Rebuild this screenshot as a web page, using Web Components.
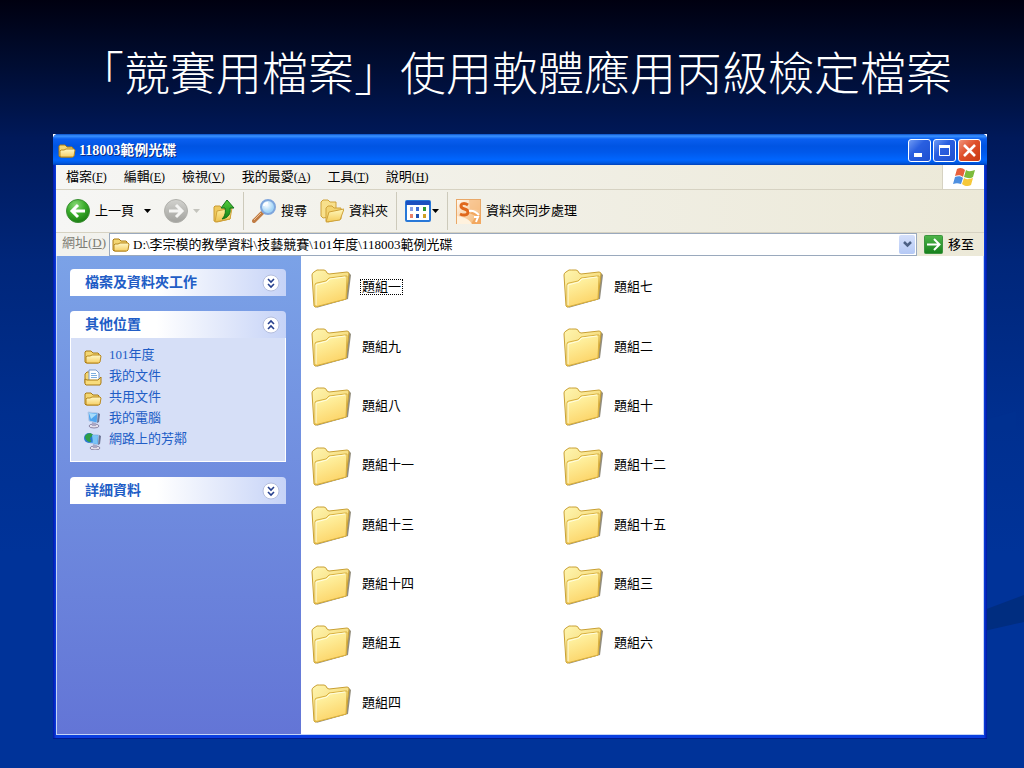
<!DOCTYPE html>
<html lang="zh-Hant">
<head>
<meta charset="utf-8">
<title>「競賽用檔案」使用軟體應用丙級檢定檔案</title>
<style>
body { margin: 0; font: 13px/18px "Liberation Serif", "Noto Sans CJK TC", sans-serif; color: #000; }
</style>
</head>
<body>
<slide-page heading="「競賽用檔案」使用軟體應用丙級檢定檔案">
  <xp-window heading="118003範例光碟">
    <xp-menubar slot="bars"></xp-menubar>
    <xp-toolbar slot="bars">
      <tool-button icon="back" menu>上一頁</tool-button>
      <tool-button icon="forward" menu off label="下一頁"></tool-button>
      <tool-button icon="up" label="往上"></tool-button>
      <tool-rule></tool-rule>
      <tool-button icon="search">搜尋</tool-button>
      <tool-button icon="folders">資料夾</tool-button>
      <tool-rule></tool-rule>
      <tool-button icon="views" menu tight label="檢視"></tool-button>
      <tool-rule></tool-rule>
      <tool-button icon="sync">資料夾同步處理</tool-button>
    </xp-toolbar>
    <xp-address slot="bars" path="D:\李宗模的教學資料\技藝競賽\101年度\118003範例光碟"></xp-address>
    <task-panel slot="side" heading="檔案及資料夾工作"></task-panel>
    <task-panel slot="side" heading="其他位置" open>
      <task-link icon="small">101年度</task-link>
      <task-link icon="docs">我的文件</task-link>
      <task-link icon="small">共用文件</task-link>
      <task-link icon="computer">我的電腦</task-link>
      <task-link icon="network">網路上的芳鄰</task-link>
    </task-panel>
    <task-panel slot="side" heading="詳細資料"></task-panel>
    <folder-item current>題組一</folder-item>
    <folder-item>題組九</folder-item>
    <folder-item>題組八</folder-item>
    <folder-item>題組十一</folder-item>
    <folder-item>題組十三</folder-item>
    <folder-item>題組十四</folder-item>
    <folder-item>題組五</folder-item>
    <folder-item>題組四</folder-item>
    <folder-item>題組七</folder-item>
    <folder-item>題組二</folder-item>
    <folder-item>題組十</folder-item>
    <folder-item>題組十二</folder-item>
    <folder-item>題組十五</folder-item>
    <folder-item>題組三</folder-item>
    <folder-item>題組六</folder-item>
  </xp-window>
</slide-page>
<script>
const grad = (id, a, b, dir = 'x2="0" y2="1"') =>
  `<linearGradient id="${id}" x1="0" y1="0" ${dir}><stop offset="0" stop-color="${a}"/><stop offset="1" stop-color="${b}"/></linearGradient>`;
const svg = (w, h, body) => `<svg width="${w}" height="${h}" viewBox="0 0 ${w} ${h}" aria-hidden="true">${body}</svg>`;
const flag = `
  <path d="M4 3C7 1 10 2 12 4L10 11C8 9 5 9 2 10Z" fill="#e8603c"/>
  <path d="M13 4C16 6 19 5 22 4L20 11C17 13 14 12 11 11Z" fill="#7dbb3c"/>
  <path d="M2 11C5 10 8 10 10 12L8 18C5 17 3 17 0 18Z" fill="#4e8fe0"/>
  <path d="M11 12C14 14 17 13 20 12L18 19C15 21 11 20 9 18Z" fill="#f6c83a"/>`;
const monitor = `
  <ellipse cx="10" cy="15" rx="5" ry="2" fill="#e4dfea" stroke="#8a86a6"/>
  <path d="M8 11h4v4H8z" fill="#a9a6c4"/>
  <path d="M4 1L14 2L13 12L5 10Z" fill="#4ea5ef" stroke="#b9cbe8"/>
  <path d="M14 2L16 3L15 11L13 12Z" fill="#6c7596"/>
  <path d="M5 2L13 3L7 8Z" fill="#a8dcfb"/>`;
const smallFolder = `<defs>${grad('f', '#fff9c8', '#f6cf66')}</defs>
  <path d="M1 13V3L2 2H7L9 4H14L15 5V13L14 14H2Z" fill="#f3d673" stroke="#a97a14"/>
  <path d="M2 13V8L3 7H6L8 6H16L17 7L16 13L15 14H3Z" fill="url(#f)" stroke="#b98a20"/>`;

const ICONS = {
  back: svg(24, 24, `<defs><radialGradient id="g" cx=".4" cy=".25" r=".8"><stop offset="0" stop-color="#8ad978"/><stop offset=".5" stop-color="#3aad2b"/><stop offset="1" stop-color="#17790f"/></radialGradient></defs>
    <circle cx="12" cy="12" r="11.5" fill="url(#g)" stroke="#3c8f34"/><path d="M12 6L6 12L12 18M7 12H19" fill="none" stroke="#fff" stroke-width="3"/>`),
  forward: svg(24, 24, `<defs>${grad('g', '#d2d2ce', '#a2a29e')}</defs>
    <circle cx="12" cy="12" r="11.5" fill="url(#g)" stroke="#b0b0ab"/><path d="M12 6L18 12L12 18M17 12H5" fill="none" stroke="#f5f5f3" stroke-width="3"/>`),
  up: svg(22, 24, `<defs>${grad('f', '#fff3a4', '#edc04c')}${grad('g', '#54cf3c', '#128014')}</defs>
    <path d="M1 22V8L2 7H7L9 9H18L17 20L4 23Z" fill="#efc95c" stroke="#c99a30"/>
    <path d="M4 12L19 9L17 20L2 23Z" fill="url(#f)" stroke="#d0a23a"/>
    <path d="M14 1L21 9H17C18 15 15 19 9 20C12 17 13 13 12 9H8Z" fill="url(#g)" stroke="#15741a"/>`),
  search: svg(24, 24, `<defs><radialGradient id="g" cx=".4" cy=".35"><stop offset="0" stop-color="#fff"/><stop offset="1" stop-color="#a3d5f7"/></radialGradient></defs>
    <path d="M2 22L10 14" stroke="#c07c44" stroke-width="4" stroke-linecap="round"/><path d="M2 21L9 14" stroke="#ecc094"/>
    <circle cx="16" cy="8" r="7" fill="url(#g)" stroke="#7fa6dc" stroke-width="2"/><path d="M12 7C12 5 14 4 16 4" stroke="#fff" stroke-width="2" fill="none"/>`),
  folders: svg(24, 24, `<defs>${grad('f', '#fff8bd', '#f4cc5a')}</defs>
    <path d="M1 17V3L3 1H8L10 3H16V17L3 19Z" fill="#f8e08c" stroke="#cfa23a"/>
    <path d="M6 22V9L8 7H12L14 9H21V20L8 23Z" fill="#f3d470" stroke="#cfa23a"/>
    <path d="M9 13L24 10L20 21L6 23Z" fill="url(#f)" stroke="#cfa23a"/>`),
  views: svg(26, 22, `<rect x="1" y="1" width="24" height="20" rx="1" fill="#fff" stroke="#2878d8" stroke-width="2"/><path d="M1 1h24v4H1z" fill="#1c50c0"/>
    <path d="M5 7h3v4H5z" fill="#8aa2e8"/><path d="M11 7h3v4h-3z" fill="#3c6cd4"/><path d="M18 7h3v4h-3z" fill="#2c9a34"/>
    <path d="M5 14h3v4H5z" fill="#ec8068"/><path d="M11 14h3v4h-3z" fill="#1c50b0"/><path d="M18 14h3v4h-3z" fill="#cda024"/>`),
  sync: svg(25, 25, `<defs>${grad('g', '#fffaf2', '#f3b068', 'x2="1" y2="1"')}</defs>
    <rect x=".5" y=".5" width="24" height="24" fill="url(#g)" stroke="#e9a868"/>
    <path d="M13 1H24V12C20 10 16 11 14 12Z" fill="#f6bc80" opacity=".7"/>
    <path d="M13 14C18 12 22 13 25 16V25H15L20 17Z" fill="#f2a860"/>
    <path d="M1 17C8 18 13 20 16 25H1Z" fill="#fff2de"/>
    <path d="M12 6C9 4 5 4 5 7C5 11 12 9 12 13C12 16 8 17 4 15" fill="none" stroke="#e0681c" stroke-width="3"/>
    <path d="M13 12C17 11 20 13 23 16M18 18H22L20 23" fill="none" stroke="#fff" stroke-width="2"/>`),
  caret: svg(7, 4, '<path d="M0 0H7L3.5 4Z" fill="currentColor"/>'),
  small: svg(18, 16, smallFolder),
  docs: svg(18, 17, `<path d="M1 14V5L3 3H7V14Z" fill="#f3d673" stroke="#a97a14"/><path d="M5 1H12L15 4V12H5Z" fill="#fff" stroke="#7d9cc9"/>
    <path d="M7 4.5h5M7 6.500h6M7 8.500h6" stroke="#7fb0e0"/><path d="M1 10L3 11H14L17 8V14L16 16H2L1 15Z" fill="#f8dc7c" stroke="#a97a14"/>`),
  computer: svg(18, 18, monitor),
  network: svg(18, 18, `<g transform="translate(1 1)">${monitor}</g><circle cx="5" cy="6" r="5" fill="#2b7bd0"/><path d="M1 4C3 1 7 0 9 3L6 6L7 10C4 10 1 8 1 4Z" fill="#2f9e46"/><path d="M8 3L14 4L13 12L9 11Z" fill="#7cc4f6"/>`),
  address: svg(18, 16, smallFolder),
  flag: svg(22, 22, flag),
  go: svg(19, 19, `<defs>${grad('g', '#4fb64a', '#16801c')}</defs><rect x=".5" y=".5" width="18" height="18" rx="1" fill="url(#g)" stroke="#3d9440"/>
    <path d="M3 9.500H15M10 4L15.500 9.500L10 15" fill="none" stroke="#fff" stroke-width="2"/>`),
  down: svg(9, 7, '<path d="M1 1L4.500 4.500L8 1" fill="none" stroke="#4d6185" stroke-width="2.500"/>'),
  more: svg(18, 18, `<circle cx="9" cy="9" r="8" fill="#fff" stroke="#b4bede"/><path d="M6 5L9 8L12 5M6 10L9 13L12 10" fill="none" stroke="#27408e" stroke-width="1.600"/>`),
  less: svg(18, 18, `<circle cx="9" cy="9" r="8" fill="#fff" stroke="#b4bede"/><path d="M6 8L9 5L12 8M6 13L9 10L12 13" fill="none" stroke="#27408e" stroke-width="1.600"/>`),
  min: svg(21, 21, '<path d="M5 13h8v4H5z" fill="#fff"/>'),
  max: svg(21, 21, '<path d="M5.500 5.500h10v10h-10z" fill="none" stroke="#fff"/><path d="M5 5h11v3H5z" fill="#fff"/>'),
  close: svg(21, 21, '<path d="M5 5L16 16M16 5L5 16" stroke="#fff" stroke-width="2.600"/>'),
  folder: svg(40, 40, `<defs>${grad('f', '#fffbb4', '#fcd468', 'x2=".4" y2="1"')}${grad('b', '#fff6b0', '#f0cc60', 'x2="1" y2="1"')}</defs>
    <path d="M5 39L37 30L40 6L38 4Z" fill="#77705c" opacity=".8"/>
    <path d="M3 37L1 6Q1 4 3 3L6 1Q8 1 13 1Q15 1 16 4L18 5L36 3Q38 3 38 5L35 30L4 38Z" fill="url(#b)" stroke="#c9a034"/>
    <path d="M4 38L4 16Q4 14 6 14L15 12L18 9L34 7Q37 6 36 9L35 30Z" fill="url(#f)" stroke="#d8b040"/>
    <path d="M5 36L5 16L16 13L19 10L34 8" fill="none" stroke="#fffde0"/>`)
};

const RESET = `*{box-sizing:border-box} svg{display:block;flex:none} button,input{font:inherit;color:inherit;border:0;margin:0;padding:0;background:none} a{color:inherit;text-decoration:none}`;
const define = (name, css, html) => customElements.define(name, class extends HTMLElement {
  constructor() {
    super();
    const t = document.createElement('template');
    t.innerHTML = `<style>${RESET}${css}</style>${html(this)}`;
    this.attachShadow({ mode: 'open' }).append(t.content.cloneNode(true));
  }
});

define('slide-page', `
  :host{position:relative;display:flex;flex-direction:column;min-height:100vh;padding:0 37px 29px 53px;box-sizing:border-box;
    background:linear-gradient(#000010 0,#000c30 8%,#00195a 18%,#00267a 34%,#002f8f 54%,#003399 72%,#003399)}
  h1{margin:0;padding:40px 0 34px 25px;font:300 46px/60px "Noto Sans CJK TC",sans-serif;color:#fff;white-space:nowrap}
  .swoosh{position:absolute;right:0;bottom:0}
  slot::slotted(*){flex:1}`,
  el => `<div class="swoosh">${svg(40, 360, '<path d="M0 202L40 187V214L0 223Z" fill="#002d80"/><path d="M0 12L32 3V22H0Z" fill="#003090"/>')}</div>
    <h1>${el.getAttribute('heading')}</h1><slot></slot>`);

define('xp-window', `
  :host{position:relative;display:flex;flex-direction:column;background:linear-gradient(#fff 0 8px,transparent 8px)}
  .frame{flex:1;display:flex;flex-direction:column;padding:0 3px 3px;background:linear-gradient(90deg,#0018a8,#0a3fe0 3px,#0a3fe0 calc(100% - 3px),#0018a0);border-radius:5px 5px 0 0;overflow:hidden;border-bottom:1px solid #001a90}
  header{display:flex;align-items:center;height:31px;margin:0 -3px;padding:2px 6px 0 5px;gap:2px;color:#fff;
    background:linear-gradient(#0a50c8 0,#3a92ff 2px,#0a5ff0 5px,#0054e3 12px,#0058ea 18px,#0066ff 26px,#0058e0 29px,#0040b8)}
  h2{flex:1;margin:0;padding-left:1px;font-size:14px;line-height:18px;text-shadow:1px 1px #0a2a80}
  .c{border:1px solid #fff;border-radius:3px;width:23px;height:23px;background:linear-gradient(135deg,#6f9bf4,#2a5fe0 40%,#1e4fd0)}
  .c.x{background:linear-gradient(135deg,#f0937a,#df4f2a 45%,#c83a14)}
  .body{flex:1;display:grid;grid-template-columns:244px 1fr;background:#fff;border:solid #c4d4f6;border-width:0 1px 1px}
  aside{display:flex;flex-direction:column;gap:15px;padding:13px 15px 13px 13px;background:linear-gradient(#7ba2e7,#6375d6)}
  .files{display:grid;grid-auto-flow:column;grid-template-rows:repeat(8,1fr);grid-auto-columns:252px;padding:3px 0 0 10px}`,
  el => `<div class="frame"><header>${svg(18, 16, smallFolder)}<h2>${el.getAttribute('heading')}</h2>
    <button class="c" aria-label="最小化">${ICONS.min}</button><button class="c" aria-label="最大化">${ICONS.max}</button><button class="c x" aria-label="關閉">${ICONS.close}</button></header>
    <slot name="bars"></slot><div class="body"><aside><slot name="side"></slot></aside><main class="files"><slot></slot></main></div></div>`);

define('xp-menubar', `
  :host{display:flex;height:24px;background:linear-gradient(90deg,#f6f6f4,#ece9d8);border-bottom:1px solid #d6d2c2}
  nav{flex:1;display:flex;align-items:center;gap:17px;padding-left:10px}
  small{font-size:12px}
  .logo{display:flex;align-items:center;justify-content:center;width:42px;background:#fff;border-left:1px solid #d6d2c2}`,
  () => `<nav>${[['檔案', 'F'], ['編輯', 'E'], ['檢視', 'V'], ['我的最愛', 'A'], ['工具', 'T'], ['說明', 'H']]
    .map(([t, k]) => `<button>${t}<small>(<u>${k}</u>)</small></button>`).join('')}</nav><div class="logo">${ICONS.flag}</div>`);

define('xp-toolbar', `:host{display:flex;align-items:center;gap:13px;height:43px;padding-left:10px;background:linear-gradient(90deg,#f6f6f4,#ece9d8);border-bottom:1px solid #d6d2c2;box-sizing:border-box}`, () => '<slot></slot>');
define('tool-rule', `:host{display:block;width:1px;height:38px;margin:0 -5px;background:#cdcabb}`, () => '');
define('tool-button', `
  :host{display:block}
  button{display:flex;align-items:center;gap:5px;white-space:nowrap}
  :host([tight]) button{gap:1px}
  .caret{color:#000} :host([off]) .caret{color:#c4c4bd}
  .wide{margin-left:5px}`,
  el => `<button${el.hasAttribute('label') ? ` aria-label="${el.getAttribute('label')}"` : ''}>${ICONS[el.getAttribute('icon')]}${el.textContent.trim() ? '<span><slot></slot></span>' : ''}${el.hasAttribute('menu') ? `<span class="caret${el.hasAttribute('label') ? '' : ' wide'}">${ICONS.caret}</span>` : ''}</button>`);

define('xp-address', `
  :host{display:flex;align-items:stretch;height:23px;padding:0 1px;background:linear-gradient(90deg,#f2f2ee,#ece9d8);box-sizing:border-box}
  label{width:52px;padding:1px 0 0 5px;color:#7d7c73;white-space:nowrap}
  .box{flex:1;display:flex;align-items:center;gap:3px;padding-left:2px;background:#fff;border:1px solid #9aa9bd}
  input{flex:1;min-width:0;outline:0}
  .drop{display:flex;align-items:center;justify-content:center;width:16px;height:19px;background:linear-gradient(#d5e0fb,#b5c9f5);border-radius:2px;margin-right:1px}
  .go{display:flex;align-items:center;gap:5px;width:66px;padding-left:7px}`,
  el => `<label for="path">網址(<u>D</u>)</label><div class="box">${ICONS.address}<input id="path" value="${el.getAttribute('path')}"><button class="drop" aria-label="展開">${ICONS.down}</button></div><button class="go">${ICONS.go}移至</button>`);

define('task-panel', `
  :host{display:block}
  button{display:flex;align-items:center;justify-content:space-between;width:100%;height:27px;padding:0 6px 0 15px;border-radius:4px 4px 0 0;
    background:linear-gradient(90deg,#fff 40%,#c6d3f7);color:#215dc6;font-weight:700;font-size:14px;text-align:left}
  .list{display:grid;grid-auto-rows:21px;padding:6px 0 12px 13px;border:1px solid #fff;border-top:0;background:#d6dff7}`,
  el => { const open = el.hasAttribute('open');
    return `<button aria-expanded="${open}">${el.getAttribute('heading')}${open ? ICONS.less : ICONS.more}</button>${open ? '<div class="list"><slot></slot></div>' : ''}`; });

define('task-link', `:host{display:block} a{display:flex;align-items:center;gap:7px;height:21px;color:#215dc6} svg{margin-top:4px}`,
  el => `<a href="#">${ICONS[el.getAttribute('icon')]}<slot></slot></a>`);

define('folder-item', `:host{display:flex;align-items:center} a{display:flex;align-items:center;gap:10px} span{padding:0 1px;line-height:14px;margin-bottom:3px}
  :host([current]) span{outline:1px dotted #000}`,
  () => `<a href="#">${ICONS.folder}<span><slot></slot></span></a>`);
</script>
</body>
</html>
